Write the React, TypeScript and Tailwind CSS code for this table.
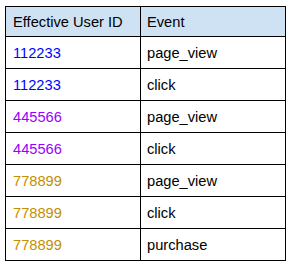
const rows: { id: string; event: string; color: string }[] = [
  { id: "112233", event: "page_view", color: "text-[#0000ff]" },
  { id: "112233", event: "click", color: "text-[#0000ff]" },
  { id: "445566", event: "page_view", color: "text-[#9900ff]" },
  { id: "445566", event: "click", color: "text-[#9900ff]" },
  { id: "778899", event: "page_view", color: "text-[#bf9000]" },
  { id: "778899", event: "click", color: "text-[#bf9000]" },
  { id: "778899", event: "purchase", color: "text-[#bf9000]" },
];

export default function App() {
  return (
    <div className="w-[293px] h-[268px] bg-white pl-[5px] pt-[6px] font-['Liberation_Sans',Arial,sans-serif] text-[14.67px] text-black">
      <div className="w-[281px] border border-black">
        <div className="grid grid-cols-[135px_1fr] h-[30px] bg-[#cfe2f3] border-b border-black">
          <div className="flex items-center pl-[7px] border-r border-black">Effective User ID</div>
          <div className="flex items-center pl-[6px]">Event</div>
        </div>
        {rows.map((r, i) => (
          <div
            key={i}
            className={
              i < rows.length - 1
                ? "grid grid-cols-[135px_1fr] h-[32px] border-b border-black"
                : "grid grid-cols-[135px_1fr] h-[31px]"
            }
          >
            <div className={"flex items-center pl-[7px] pt-[1px] border-r border-black " + r.color}>{r.id}</div>
            <div className="flex items-center pl-[6px] pt-[1px]">{r.event}</div>
          </div>
        ))}
      </div>
    </div>
  );
}
